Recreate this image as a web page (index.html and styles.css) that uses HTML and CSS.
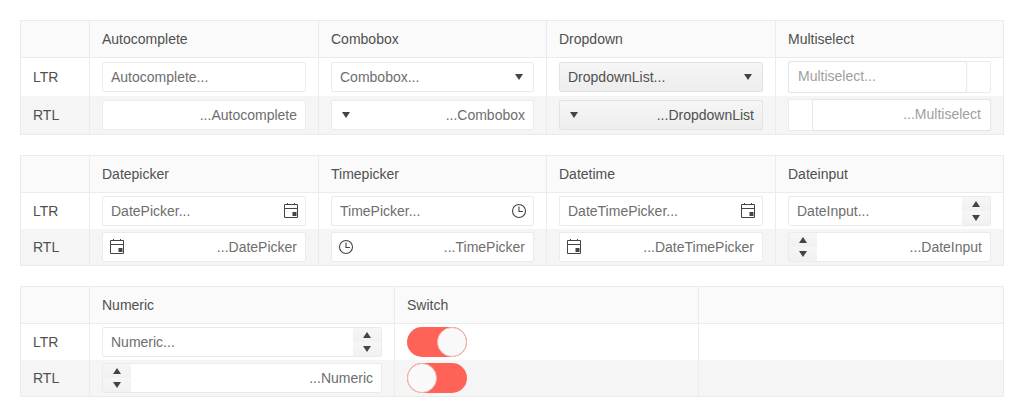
FILE: index.html
```html
<!DOCTYPE html>
<html lang="en">
<head>
    <meta charset="UTF-8">
    <meta name="viewport" content="width=device-width, initial-scale=1.0">
    <link rel="stylesheet" href="styles.css">
</head>
<body>

<svg class="icon-defs" width="0" height="0">
    <symbol id="calendar" viewBox="0 0 16 16">
        <path d="M1.5 1.5h13v13h-13zM1.5 5.5h13M4.5 0v2M11.5 0v2" fill="none" stroke="currentColor"/>
        <rect x="9.5" y="9" width="4" height="4" fill="currentColor"/>
    </symbol>
    <symbol id="clock" viewBox="0 0 16 16">
        <circle cx="8" cy="8" r="6.5" fill="none" stroke="currentColor" stroke-width="1.1"/>
        <path d="M8 3.5v5h4" fill="none" stroke="currentColor" stroke-width="1.1"/>
    </symbol>
</svg>

<table class="grid grid-four">
    <tr class="head">
        <th></th><th>Autocomplete</th><th>Combobox</th><th>Dropdown</th><th>Multiselect</th>
    </tr>
    <tr class="tall">
        <td>LTR</td>
        <td><div class="field"><span class="value">Autocomplete...</span></div></td>
        <td><div class="field"><span class="value">Combobox...</span><span class="select"><i class="arrow-down"></i></span></div></td>
        <td><div class="field drop"><span class="value">DropdownList...</span><span class="select"><i class="arrow-down"></i></span></div></td>
        <td><div class="multi"><div class="multi-inner">Multiselect...</div></div></td>
    </tr>
    <tr class="tall alt" dir="rtl">
        <td dir="ltr">RTL</td>
        <td><div class="field"><span class="value">Autocomplete...</span></div></td>
        <td><div class="field"><span class="value">Combobox...</span><span class="select"><i class="arrow-down"></i></span></div></td>
        <td><div class="field drop"><span class="value">DropdownList...</span><span class="select"><i class="arrow-down"></i></span></div></td>
        <td><div class="multi"><div class="multi-inner">Multiselect...</div></div></td>
    </tr>
</table>

<table class="grid grid-four">
    <tr class="head">
        <th></th><th>Datepicker</th><th>Timepicker</th><th>Datetime</th><th>Dateinput</th>
    </tr>
    <tr>
        <td>LTR</td>
        <td><div class="field"><span class="value">DatePicker...</span><span class="select"><svg class="icon"><use href="#calendar"/></svg></span></div></td>
        <td><div class="field"><span class="value">TimePicker...</span><span class="select"><svg class="icon"><use href="#clock"/></svg></span></div></td>
        <td><div class="field"><span class="value">DateTimePicker...</span><span class="select"><svg class="icon"><use href="#calendar"/></svg></span></div></td>
        <td><div class="field"><span class="value">DateInput...</span><span class="spin"><span class="spin-btn"><i class="arrow-up"></i></span><span class="spin-btn"><i class="arrow-down"></i></span></span></div></td>
    </tr>
    <tr class="alt" dir="rtl">
        <td dir="ltr">RTL</td>
        <td><div class="field"><span class="value">DatePicker...</span><span class="select"><svg class="icon"><use href="#calendar"/></svg></span></div></td>
        <td><div class="field"><span class="value">TimePicker...</span><span class="select"><svg class="icon"><use href="#clock"/></svg></span></div></td>
        <td><div class="field"><span class="value">DateTimePicker...</span><span class="select"><svg class="icon"><use href="#calendar"/></svg></span></div></td>
        <td><div class="field"><span class="value">DateInput...</span><span class="spin"><span class="spin-btn"><i class="arrow-up"></i></span><span class="spin-btn"><i class="arrow-down"></i></span></span></div></td>
    </tr>
</table>

<table class="grid grid-three">
    <tr class="head">
        <th></th><th>Numeric</th><th>Switch</th><th></th>
    </tr>
    <tr>
        <td>LTR</td>
        <td><div class="field"><span class="value">Numeric...</span><span class="spin"><span class="spin-btn"><i class="arrow-up"></i></span><span class="spin-btn"><i class="arrow-down"></i></span></span></div></td>
        <td><div class="switch"><span class="knob"></span></div></td>
        <td></td>
    </tr>
    <tr class="alt" dir="rtl">
        <td dir="ltr">RTL</td>
        <td><div class="field"><span class="value">Numeric...</span><span class="spin"><span class="spin-btn"><i class="arrow-up"></i></span><span class="spin-btn"><i class="arrow-down"></i></span></span></div></td>
        <td><div class="switch"><span class="knob"></span></div></td>
        <td></td>
    </tr>
</table>

</body>
</html>
```

FILE: styles.css
```css
body {
    margin: 0;
    padding: 20px;
    font-family: "Liberation Sans", Arial, sans-serif;
    font-size: 14px;
    color: #505050;
    background-color: #fff;
}

.icon-defs {
    display: block;
    height: 0;
}

.grid {
    width: 984px;
    table-layout: fixed;
    border-collapse: collapse;
    margin-bottom: 20px;
    border: 1px solid #ebebeb;
}

.grid th,
.grid td {
    box-sizing: border-box;
    border: 1px solid #ebebeb;
    border-top: 0;
    border-bottom: 0;
    padding: 3px 12px;
    text-align: start;
    font-weight: 400;
}

.grid tr.alt td {
    background-color: #f5f5f5;
}

.grid .head th {
    height: 37px;
    padding: 0 12px;
    background-color: #fafafa;
    border-bottom: 1px solid #ebebeb;
}

.grid .tall td {
    padding: 4px 12px;
}

.grid-four th:nth-child(1) { width: 69px; }
.grid-four th:nth-child(2) { width: 229px; }
.grid-four th:nth-child(3) { width: 228px; }
.grid-four th:nth-child(4) { width: 229px; }

.grid-three th:nth-child(1) { width: 69px; }
.grid-three th:nth-child(2) { width: 305px; }
.grid-three th:nth-child(3) { width: 304px; }

.field {
    display: flex;
    align-items: stretch;
    height: 30px;
    box-sizing: border-box;
    border: 1px solid #ebebeb;
    border-radius: 2px;
    background-color: #fff;
    color: #6e6e6e;
}

.value {
    flex: 1;
    padding: 0 8px;
    line-height: 28px;
    white-space: nowrap;
}

.select {
    display: flex;
    align-items: center;
    justify-content: center;
    width: 28px;
    color: #444;
}

.drop {
    color: #505050;
    background-color: #f3f3f3;
    background-image: linear-gradient(to bottom, #f6f6f6, #ededed);
    border-color: #e3e3e3;
}

.arrow-down,
.arrow-up {
    display: block;
    width: 0;
    height: 0;
    border-left: 4.5px solid transparent;
    border-right: 4.5px solid transparent;
}

.arrow-down {
    border-top: 6px solid #444;
}

.arrow-up {
    border-bottom: 6px solid #444;
}

.icon {
    width: 16px;
    height: 16px;
}

.spin {
    display: flex;
    flex-direction: column;
    width: 28px;
    background-color: #f3f3f3;
}

.spin-btn {
    flex: 1;
    display: flex;
    align-items: center;
    justify-content: center;
    background-image: linear-gradient(to bottom, #f6f6f6, #f1f1f1);
}

.multi {
    height: 32px;
    margin: -1px 0;
    box-sizing: border-box;
    border: 1px solid #ebebeb;
    border-radius: 2px;
    background-color: #fff;
}

.multi-inner {
    width: 177px;
    height: 30px;
    box-sizing: border-box;
    padding: 0 9px;
    line-height: 28px;
    color: #a0a0a0;
    background-color: #fff;
    border-radius: 2px;
    box-shadow: 0 0 1px 1px #e6e6e6;
}

.switch {
    display: flex;
    justify-content: flex-end;
    width: 60px;
    height: 30px;
    margin-right: auto;
    border-radius: 15px;
    background-color: #ff6358;
}

.knob {
    width: 30px;
    height: 30px;
    box-sizing: border-box;
    border-radius: 50%;
    background-color: #f9f9f9;
    border: 1px solid #f3b7b2;
}
```
